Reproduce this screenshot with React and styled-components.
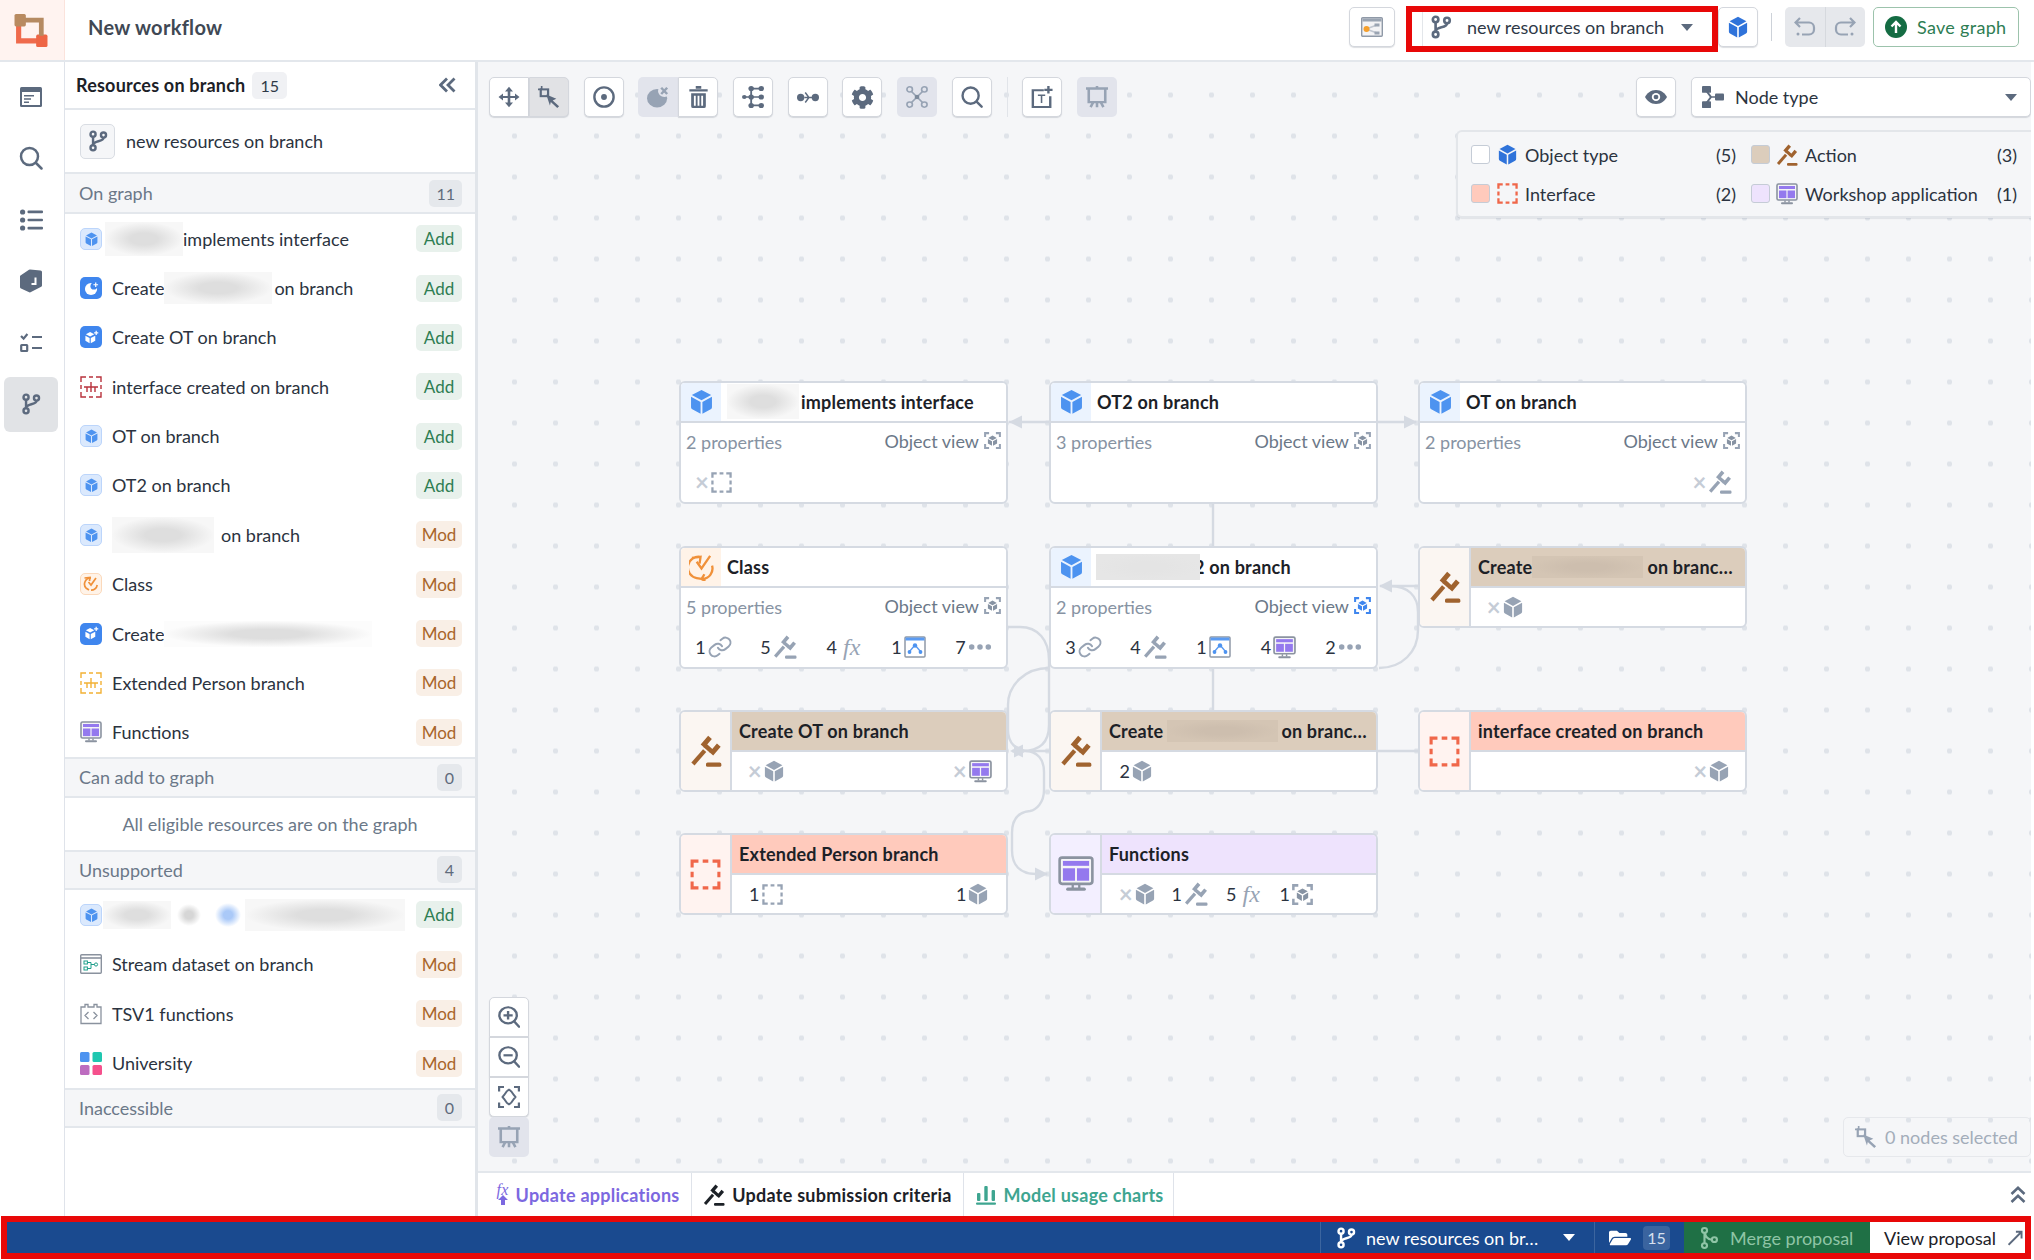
import React from 'react';
import styled, { createGlobalStyle } from 'styled-components';
import { FaCog, FaFolderOpen } from 'react-icons/fa';
import { Link as LinkIcon } from 'lucide-react';

const FONT = 'Lato, "Noto Sans", "Liberation Sans", sans-serif';
const SLATE = '#5c6a7e';
const GREY = '#97a3b4';
const BLUE = '#4d93f0';

const Global = createGlobalStyle`
  html, body { margin: 0; padding: 0; background: #fff; }
  body { font-family: ${FONT}; font-size: 18px; color: #1c2127; overflow: hidden; }
  * { box-sizing: border-box; }
`;

const Shell = styled.div`
  width: 2034px;
  height: 1260px;
  display: flex;
  flex-direction: column;
  background: #fff;
`;

const TopBar = styled.header`
  height: 62px;
  flex: none;
  display: flex;
  align-items: center;
  border-bottom: 2px solid #e3e7ec;
  padding-right: 15px;
`;

const LogoCell = styled.div`
  width: 65px;
  height: 100%;
  display: flex;
  align-items: center;
  justify-content: center;
  padding-right: 3px;
  background: #fff3f0;
  border-right: 1px solid #fbe3dc;
`;

const Title = styled.div`
  margin-left: 23px;
  margin-top: -6px;
  font-size: 20px;
  font-weight: 700;
  letter-spacing: .3px;
  color: #404854;
`;

const TopActions = styled.div`
  margin-left: auto;
  margin-top: -6px;
  display: flex;
  align-items: center;
`;

const Btn = styled.button`
  width: ${p => p.$w || 40}px;
  height: ${p => p.$h || 40}px;
  padding: 0;
  display: flex;
  align-items: center;
  justify-content: center;
  font: inherit;
  border-radius: 5px;
  color: ${SLATE};
  background: ${p => (p.$off ? '#e2e4ec' : p.$on ? '#e1e2e5' : '#fff')};
  border: ${p => (p.$off ? '0' : '1px solid #d4d7dd')};
  box-shadow: ${p => (p.$off ? 'none' : '0 1px 1px rgba(60, 70, 90, .18)')};
`;

const RedBox = styled.div`
  width: 312px;
  height: 46px;
  margin: 4px 0 0 11px;
  border: 6px solid #e80808;
  display: flex;
  align-items: center;
  background: #fff;
`;

const BranchSelect = styled.div`
  margin-left: 10px;
  height: 100%;
  flex: 1;
  display: flex;
  align-items: center;
  gap: 14px;
  padding: 0 0 4px 6px;
  font-size: 18px;
  color: #2f3947;
  border-left: 1px solid #e3e6ea;
`;

const Caret = styled.span`
  width: 0;
  height: 0;
  margin-left: ${p => (p.$auto ? 'auto' : `${p.$ml || 0}px`)};
  border-left: 6px solid transparent;
  border-right: 6px solid transparent;
  border-top: 7px solid ${p => p.$c || SLATE};
`;

const VSep = styled.div`
  width: 1px;
  height: 28px;
  margin: 0 13px;
  background: #cdd2d9;
`;

const UndoGroup = styled.div`
  width: 80px;
  height: 40px;
  display: flex;
  border-radius: 5px;
  background: #e6e8ec;
`;

const UndoBtn = styled.div`
  flex: 1;
  display: flex;
  align-items: center;
  justify-content: center;
  & + & { border-left: 1px solid #d6d9de; }
`;

const SaveBtn = styled.button`
  width: 146px;
  height: 40px;
  margin-left: 8px;
  display: flex;
  align-items: center;
  gap: 10px;
  padding: 0 0 0 11px;
  font: inherit;
  font-size: 18px;
  letter-spacing: .3px;
  color: #2e7d53;
  background: #fff;
  border: 1px solid #9cc3ac;
  border-radius: 5px;
`;

const Main = styled.div`
  flex: 1;
  min-height: 0;
  display: flex;
`;

const Rail = styled.nav`
  width: 65px;
  flex: none;
  display: flex;
  flex-direction: column;
  gap: 6.6px;
  padding: 7px 0 0 4px;
  border-right: 1px solid #dfe3ea;
`;

const RailItem = styled.div`
  width: 54px;
  height: 55px;
  display: flex;
  align-items: center;
  justify-content: center;
  border-radius: 6px;
  background: ${p => (p.$active ? '#e1e3e6' : 'transparent')};
`;

const Panel = styled.aside`
  width: 413px;
  flex: none;
  border-right: 3px solid #e1e5ea;
`;

const PanelHead = styled.div`
  height: 48px;
  display: flex;
  align-items: center;
  gap: 7px;
  padding: 0 19px 0 11px;
  border-bottom: 2px solid #e3e7ec;
  font-weight: 700;
  letter-spacing: .2px;
  color: #1c2127;
`;

const CollapseIcon = styled.span`
  margin-left: auto;
  display: flex;
`;

const Count = styled.span`
  min-width: 25px;
  height: 27px;
  padding: 0 ${p => (p.$dark ? 8 : 7)}px;
  display: inline-flex;
  align-items: center;
  justify-content: center;
  border-radius: 5px;
  font-size: 16px;
  font-weight: 400;
  letter-spacing: 0;
  color: ${p => (p.$dark ? '#2f3947' : '#5f6b7c')};
  background: ${p => (p.$dark ? '#f0f1f4' : '#e5e8ec')};
`;

const BranchRow = styled.div`
  height: 64px;
  display: flex;
  align-items: center;
  gap: 11px;
  padding-left: 15px;
  border-bottom: 2px solid #e3e7ec;
  color: #2b3340;
`;

const BranchChip = styled.div`
  width: 35px;
  height: 35px;
  display: flex;
  align-items: center;
  justify-content: center;
  background: #f5f6f8;
  border: 1px solid #d9dde3;
  border-radius: 5px;
`;

const Section = styled.div`
  height: ${p => p.$h || 40}px;
  display: flex;
  align-items: center;
  justify-content: space-between;
  padding: 0 13px 0 14px;
  background: #f5f6f8;
  border-bottom: 2px solid #e3e7ec;
  border-top: ${p => (p.$top ? '2px solid #e3e7ec' : '0')};
  color: #6b7888;
`;

const Row = styled.div`
  height: ${p => p.$h}px;
  display: flex;
  align-items: center;
  padding: 0 13px 0 15px;
  color: #2b3340;
  white-space: nowrap;
`;

const Chip = styled.div`
  width: 22px;
  height: 22px;
  flex: none;
  margin-right: ${p => p.$mr ?? 10}px;
  display: flex;
  align-items: center;
  justify-content: center;
  border-radius: 5px;
  background: ${p => p.$bg || 'transparent'};
  border: ${p => (p.$bd ? `1px solid ${p.$bd}` : '0')};
`;

const Blur = styled.span`
  position: relative;
  z-index: 1;
  display: inline-block;
  flex: none;
  width: ${p => p.$w}px;
  height: ${p => p.$h}px;
  margin-left: ${p => p.$ml || 0}px;
  margin-right: ${p => p.$mr || 0}px;
  background: radial-gradient(ellipse closest-side, ${p => p.$c || '#dedede'} 35%, ${p => p.$e || '#f7f7f7'} 100%);
`;

const Tag = styled.span`
  width: 46px;
  height: 27px;
  margin-left: auto;
  flex: none;
  display: flex;
  align-items: center;
  justify-content: center;
  border-radius: 5px;
  font-size: 17px;
  color: ${p => (p.$mod ? '#a8652a' : '#2e7d53')};
  background: ${p => (p.$mod ? '#f9efe6' : '#e8f1ec')};
`;

const Empty = styled.div`
  height: 52px;
  display: flex;
  align-items: center;
  justify-content: center;
  color: #6b7888;
`;

const Work = styled.div`
  flex: 1;
  min-width: 0;
  display: flex;
  flex-direction: column;
  margin-right: 3px;
`;

const Canvas = styled.section`
  position: relative;
  flex: 1;
  min-height: 0;
  overflow: hidden;
  background-color: #f5f6f8;
  background-image: radial-gradient(circle, #dfe3e9 2.4px, transparent 3px);
  background-size: 41px 41px;
  background-position: 16px 12.5px;
`;

const Edges = styled.svg`
  position: absolute;
  left: 0;
  top: 0;
`;

const Toolbar = styled.div`
  position: absolute;
  left: 11px;
  top: 15px;
  display: flex;
  align-items: center;
  gap: 14.7px;
`;

const Group = styled.div`
  display: flex;
  flex-direction: ${p => (p.$col ? 'column' : 'row')};
  & > button { border-radius: 0; }
  & > button:first-child { border-radius: ${p => (p.$col ? '5px 5px 0 0' : '5px 0 0 5px')}; }
  & > button:last-child { border-radius: ${p => (p.$col ? '0 0 5px 5px' : '0 5px 5px 0')}; }
`;

const ToolSep = styled.div`
  width: 1px;
  height: 40px;
  background: #e1e4e9;
`;

const ViewTools = styled.div`
  position: absolute;
  right: 0;
  top: 15px;
  display: flex;
  gap: 15px;
`;

const NodeSelect = styled.div`
  width: 340px;
  height: 40px;
  display: flex;
  align-items: center;
  padding: 0 13px 0 10px;
  gap: 11px;
  color: #2b3340;
  background: #fff;
  border: 1px solid #d4d7dd;
  border-radius: 5px;
  box-shadow: 0 1px 1px rgba(60, 70, 90, .18);
`;

const Legend = styled.div`
  position: absolute;
  right: 0;
  top: 68px;
  width: 575px;
  height: 88px;
  display: grid;
  grid-template-columns: 265px 266px;
  grid-auto-rows: 39px;
  column-gap: 15px;
  padding: 3px 13px 0 13px;
  background: #f5f6f8;
  border: 2px solid #e3e6ea;
  border-right: 0;
  border-radius: 6px 0 0 6px;
  box-shadow: 0 1px 1px rgba(60, 70, 90, .1);
`;

const LegendItem = styled.div`
  display: flex;
  align-items: center;
  white-space: nowrap;
  color: #2b3340;
`;

const Swatch = styled.span`
  width: 19px;
  height: 19px;
  flex: none;
  margin-right: 6px;
  border-radius: 3px;
  background: ${p => p.$c};
  border: 1px solid #c5ccd6;
`;

const LegendIcon = styled.span`
  width: 22px;
  flex: none;
  margin-right: 7px;
  display: flex;
  justify-content: center;
`;

const LegendCount = styled.span`
  margin-left: auto;
`;

const ZoomTools = styled.div`
  position: absolute;
  left: 11px;
  bottom: 14px;
  display: flex;
  flex-direction: column;
`;

const Selected = styled.div`
  position: absolute;
  right: 0;
  bottom: 14px;
  width: 188px;
  height: 40px;
  display: flex;
  align-items: center;
  gap: 8px;
  padding-left: 11px;
  color: #a3adba;
  border: 1px solid #e6e8ec;
  border-radius: 5px;
`;

const NodeCard = styled.article`
  position: absolute;
  left: ${p => p.$x}px;
  top: ${p => p.$y}px;
  width: 329px;
  height: ${p => p.$h}px;
  display: flex;
  overflow: hidden;
  background: #fff;
  border: 2px solid #d5dae2;
  border-radius: 6px;
`;

const NodeSide = styled.div`
  width: 51px;
  flex: none;
  display: flex;
  align-items: center;
  justify-content: center;
  background: ${p => p.$bg};
  border-right: 2px solid #d5dae2;
`;

const NodeMain = styled.div`
  flex: 1;
  min-width: 0;
  display: flex;
  flex-direction: column;
`;

const NodeHead = styled.div`
  height: 40px;
  flex: none;
  display: flex;
  align-items: center;
  overflow: hidden;
  background: ${p => p.$bg || '#fff'};
  border-bottom: 2px solid #d5dae2;
  font-weight: 700;
  letter-spacing: .2px;
  color: #1c2127;
  white-space: nowrap;
`;

const HeadIcon = styled.div`
  width: 40px;
  height: 100%;
  flex: none;
  margin-right: ${p => p.$mr ?? 6}px;
  display: flex;
  align-items: center;
  justify-content: center;
  background: ${p => p.$bg};
`;

const HeadText = styled.div`
  display: flex;
  align-items: center;
  margin-top: -1px;
  padding-left: ${p => p.$pl || 0}px;
`;

const NodeInfo = styled.div`
  height: 40px;
  flex: none;
  display: flex;
  align-items: center;
  justify-content: space-between;
  margin-top: -1px;
  padding: 0 5px;
  color: #8793a3;
`;

const ViewLabel = styled.span`
  display: flex;
  align-items: center;
  gap: 5px;
  margin-top: -3px;
  color: #6b7888;
`;

const Stats = styled.div`
  flex: 1;
  display: grid;
  grid-template-columns: repeat(5, 1fr);
  align-items: center;
  padding: 0 ${p => p.$padR ?? 0}px 0 ${p => p.$pad || 0}px;
`;

const Stat = styled.div`
  display: flex;
  align-items: center;
  justify-content: center;
  gap: 2px;
  color: #2b3340;
`;

const Zero = styled.span`
  font-size: 24px;
  line-height: 20px;
  font-weight: 700;
  color: #c5ccd6;
`;

const Fx = styled.span`
  font-family: "Liberation Serif", serif;
  font-style: italic;
  font-size: 24px;
  line-height: 20px;
  color: ${GREY};
  margin-left: 4px;
`;

const ChainIcon = styled(LinkIcon)`
  transform: rotate(6deg);
`;

const TabBar = styled.div`
  height: 45px;
  flex: none;
  display: flex;
  align-items: stretch;
  border-top: 2px solid #e3e7ec;
`;

const Tab = styled.div`
  width: ${p => p.$w}px;
  display: flex;
  align-items: center;
  justify-content: center;
  gap: 7px;
  padding-left: ${p => p.$pl || 0}px;
  font-weight: 700;
  letter-spacing: .25px;
  color: ${p => p.$c};
  border-right: 1px solid #dfe3ea;
`;

const FxUp = styled.span`
  display: flex;
  flex-direction: column;
  align-items: center;
  font-family: "Liberation Serif", serif;
  font-style: italic;
  font-weight: 400;
  font-size: 16px;
  line-height: 11px;
  color: #7c68e0;
`;

const TabEnd = styled.div`
  margin-left: auto;
  display: flex;
  align-items: center;
  padding-right: 5px;
`;

const BottomFrame = styled.footer`
  height: 43px;
  flex: none;
  margin: 0 3px 1px 1px;
  display: flex;
  justify-content: flex-end;
  border: 6px solid #e80808;
  background: #1a4a8f;
  color: #fff;
  overflow: hidden;
`;

const FootCell = styled.div`
  width: ${p => p.$w}px;
  flex: none;
  display: flex;
  align-items: center;
  gap: ${p => p.$gap || 10}px;
  padding-left: ${p => p.$pl || 14}px;
  white-space: nowrap;
  overflow: hidden;
  color: ${p => p.$c || '#fff'};
  background: ${p => p.$bg || 'transparent'};
  border-left: ${p => (p.$line ? '1px solid #3c659f' : '0')};
`;

const FootCount = styled.span`
  width: 27px;
  height: 24px;
  display: flex;
  align-items: center;
  justify-content: center;
  font-size: 16px;
  color: #d6e0ef;
  background: #3a649f;
  border-radius: 4px;
`;

const Branch = ({ s = 20, c = SLATE }) => (
  <svg width={s} height={s} viewBox="0 0 20 20" fill="none" stroke={c} strokeWidth="2.2">
    <circle cx="5.5" cy="3.8" r="2.3" />
    <circle cx="15" cy="4.6" r="2.3" />
    <circle cx="5.5" cy="16.2" r="2.3" />
    <path d="M5.5 6.2V13.8M15 7C15 11 5.8 9.5 5.5 13.5" />
  </svg>
);

const Cube = ({ s = 22, c = BLUE }) => (
  <svg width={s} height={s * 1.1} viewBox="0 0 20 22.5" fill={c} preserveAspectRatio="none">
    <path d="M10 .8 18.4 5.4 10 10.1 1.6 5.4Z" />
    <path d="M.9 7 9.2 11.6V22L2 18a2 2 0 0 1-1.1-1.8Z" />
    <path d="M19.1 7 10.8 11.6V22L18 18a2 2 0 0 0 1.1-1.8Z" />
  </svg>
);

const Gavel = ({ s = 24, c = GREY }) => (
  <svg width={s} height={s} viewBox="0 0 24 24" fill={c}>
    <path d="M8 7.2 13.6.6 16.4 3 10.8 9.6ZM14.6 13 20.2 6.4 23 8.8 17.4 15.4Z" />
    <path d="M12.2 6.4 17.2 10.8 15 13.4 10 9Z" />
    <path d="M9.8 10.6 12.2 12.8 3.4 22.8 1 20.6Z" />
    <rect x="12" y="20.6" width="11.5" height="3.2" rx="1.2" />
  </svg>
);

const Dashed = ({ s = 22, c = GREY, w = 2.4 }) => (
  <svg width={s} height={s} viewBox="0 0 22 22" fill="none" stroke={c} strokeWidth={w}>
    <path d="M1.5 6V1.5H6M9 1.5h4M16 1.5h4.5V6M20.5 9v4M20.5 16v4.5H16M13 20.5H9M6 20.5H1.5V16M1.5 13V9" />
  </svg>
);

const Workshop = ({ s = 22, frame = '#8b93a0' }) => (
  <svg width={s} height={s} viewBox="0 0 22 22">
    <rect x="1" y="1" width="20" height="16" rx="1.5" fill="#f4f4f7" stroke={frame} strokeWidth="1.6" />
    <rect x="3" y="3" width="16" height="3" fill="#9479ee" />
    <rect x="3" y="7.5" width="7.4" height="7.6" fill="#9479ee" />
    <rect x="11.6" y="7.5" width="7.4" height="7.6" fill="#9479ee" />
    <path d="M9 17.5v2M13 17.5v2" stroke={frame} strokeWidth="1.4" />
    <rect x="5" y="19.3" width="12" height="2" rx="1" fill={frame} />
  </svg>
);

const AppIcon = ({ s = 22 }) => (
  <svg width={s} height={s} viewBox="0 0 22 22" fill="none">
    <rect x="1" y="1" width="20" height="20" rx="1" fill="#fff" stroke="#8f99a7" strokeWidth="1.5" />
    <rect x="1.5" y="1.5" width="19" height="3" fill="#5b9bf2" />
    <path d="M11 9 5.5 15.5M11 9 16.5 15.5" stroke="#5b9bf2" strokeWidth="1.4" />
    <circle cx="11" cy="9.5" r="2.2" fill="#4d93f0" />
    <circle cx="5.5" cy="16" r="1.9" fill="#4d93f0" />
    <circle cx="16.5" cy="16" r="1.9" fill="#4d93f0" />
  </svg>
);

const ObjectView = ({ s = 18, c = GREY, cube = '#8793a3' }) => (
  <svg width={s} height={s} viewBox="0 0 20 20" fill="none">
    <path d="M1.3 6V1.3H6M14 1.3H18.7V6M18.7 14V18.7H14M6 18.7H1.3V14" stroke={c} strokeWidth="2.4" />
    <path d="M10 4.2 15 7 10 9.8 5 7ZM4.6 8.2 9.4 10.9V16.2L4.6 13.4ZM15.4 8.2 10.6 10.9V16.2L15.4 13.4Z" fill={cube} />
  </svg>
);

const Dots = () => (
  <svg width="24" height="8" viewBox="0 0 26 8" fill={GREY}>
    <circle cx="4" cy="4" r="3" />
    <circle cx="13" cy="4" r="3" />
    <circle cx="22" cy="4" r="3" />
  </svg>
);

const ICONS = {
  cube: <Cube s={20} c={GREY} />,
  gavel: <Gavel s={24} />,
  dash: <Dashed s={21} />,
  link: <ChainIcon size={24} color={GREY} strokeWidth={2} />,
  app: <AppIcon />,
  work: <Workshop s={23} />,
  view: <ObjectView s={21} />,
  dots: <Dots />,
  fx: <Fx>fx</Fx>,
};

const Logo = () => (
  <svg width="34" height="33" viewBox="1.5 0 33 32">
    <path d="M6 10V26H26" fill="none" stroke="#ef6a4c" strokeWidth="5" />
    <rect x="23" y="20" width="11" height="12" rx="1.5" fill="#ee6545" />
    <path d="M8 6H28V21" fill="none" stroke="#b58a62" strokeWidth="4.6" />
    <rect x="2" y="0" width="11" height="12" rx="1.5" fill="#b88a60" />
  </svg>
);

const RailIcons = [
  <svg key="a" width="22" height="20" viewBox="0 0 22 20"><rect width="22" height="20" rx="1.5" fill={SLATE} /><rect x="2" y="5" width="18" height="13" fill="#fff" /><path d="M4 8h10v1.6H4zM4 11.2h7v1.6H4zM4 14.4h5V16H4z" fill={SLATE} /></svg>,
  <svg key="b" width="24" height="24" viewBox="0 0 24 24" fill="none" stroke={SLATE} strokeWidth="2.5"><circle cx="10.5" cy="10.5" r="8.5" /><path d="M17 17l5.5 5.5" strokeLinecap="round" /></svg>,
  <svg key="c" width="23" height="22" viewBox="0 0 23 22" fill={SLATE}><circle cx="2.6" cy="3" r="2.6" /><circle cx="2.6" cy="11" r="2.6" /><circle cx="2.6" cy="19" r="2.6" /><rect x="7.5" y="1.6" width="15.5" height="2.6" rx="1" /><rect x="7.5" y="9.7" width="15.5" height="2.6" rx="1" /><rect x="7.5" y="17.8" width="15.5" height="2.6" rx="1" /></svg>,
  <svg key="d" width="22" height="24" viewBox="0 0 22 24"><path d="M.5 6.5 9 .8a1.5 1.5 0 0 1 1-.3L20.5 1.5A1.5 1.5 0 0 1 22 3V16.5a1.5 1.5 0 0 1-.8 1.3L10.5 23.3a1.5 1.5 0 0 1-1.3 0L1 19.5a1.5 1.5 0 0 1-1-1.4V8a1.5 1.5 0 0 1 .5-1.5Z" fill={SLATE} /><path d="M15.5 8.5v6.5H11.5" fill="none" stroke="#fff" strokeWidth="2" /></svg>,
  <svg key="e" width="22" height="20" viewBox="0 0 22 20" fill="none" stroke={SLATE} strokeWidth="2.2"><path d="M1 3l2.6 2.6L7.4 1" /><rect x="1.2" y="12" width="6" height="6" rx=".5" /><path d="M12 4h10M12 15h10" /></svg>,
  <Branch key="f" s={22} />,
];

const cubeChip = <Chip $bg="#dbe9fd" $bd="#bcd5fb"><Cube s={13} /></Chip>;

const pieChip = (
  <Chip $bg="#3f86ee">
    <svg width="15" height="15" viewBox="0 0 16 16"><circle cx="7.5" cy="8.5" r="6.5" fill="#fff" /><circle cx="10.5" cy="5.5" r="3.6" fill="#3f86ee" /><path d="M12.5 1.5v5M10 4h5" stroke="#fff" strokeWidth="1.3" /></svg>
  </Chip>
);

const cubeActionChip = (
  <Chip $bg="#3f86ee">
    <svg width="15" height="15" viewBox="0 0 16 16" fill="#fff"><path d="M6.5 2 11 4.5 6.5 7 2 4.5ZM1.5 6 6 8.5V14L1.5 11.5ZM12 6 7.2 8.5V14L12 11.5Z" /><path d="M13 .8v4.4M10.8 3h4.4" stroke="#fff" strokeWidth="1.3" /></svg>
  </Chip>
);

const classChip = (
  <Chip $bg="#fff3e8" $bd="#fbd9bb">
    <svg width="16" height="16" viewBox="0 0 16 16" fill="none" stroke="#f0913a" strokeWidth="1.7"><path d="M8 1.8A6.2 6.2 0 0 0 3 12l3 2M8 14.2A6.2 6.2 0 0 0 14.2 9" /><path d="M1.5 2 7 1.5 6.5 5M5.5 6l2.5 3 5-7" /></svg>
  </Chip>
);

const treeIface = c => (
  <Chip>
    <svg width="22" height="22" viewBox="0 0 22 22" fill="none" stroke={c} strokeWidth="1.4">
      <path d="M1 6V1H6M9 1h4M16 1h5V6M21 9v4M21 16v5H16M13 21H9M6 21H1V16M1 13V9" />
      <path d="M4 11h14M7 11v5M11 6v10M15 11v5" />
    </svg>
  </Chip>
);

const workshopChip = <Chip><Workshop s={22} /></Chip>;

const streamChip = (
  <Chip>
    <svg width="22" height="20" viewBox="0 0 22 20" fill="none"><rect x=".7" y=".7" width="20.6" height="18.6" rx="1" stroke="#8a929e" strokeWidth="1.4" /><path d="M1 4h20" stroke="#8a929e" strokeWidth="1.6" /><rect x="4" y="7" width="3.4" height="3" stroke="#1f9e8a" /><rect x="4" y="13" width="3.4" height="3" stroke="#1f9e8a" /><circle cx="16" cy="10.5" r="1.6" stroke="#1f9e8a" /><path d="M7.5 8.5H11V14.5H7.5M11 10.5h3.5" stroke="#1f9e8a" /></svg>
  </Chip>
);

const codeChip = (
  <Chip>
    <svg width="22" height="22" viewBox="0 0 22 22" fill="none" stroke="#8a929e" strokeWidth="1.3"><path d="M1 4h4V1.5h3V4h6V1.5h3V4h4v16.5H1Z" /><path d="M8.5 9 5 12.5 8.5 16M13.5 9 17 12.5 13.5 16" /></svg>
  </Chip>
);

const uniChip = (
  <Chip>
    <svg width="22" height="23" viewBox="0 0 22 23"><rect width="9.5" height="10" rx="1.5" fill="#4d93f0" /><rect x="12.5" width="9.5" height="10" rx="1.5" fill="#1fc7b0" /><rect y="13" width="9.5" height="10" rx="1.5" fill="#bd6cc0" /><rect x="12.5" y="13" width="9.5" height="10" rx="1.5" fill="#f5508c" /></svg>
  </Chip>
);

const ROWS_ON_GRAPH = [
  { chip: <Chip $bg="#dbe9fd" $bd="#bcd5fb" $mr={3}><Cube s={13} /></Chip>, label: <><Blur $w={78} $h={34} />implements interface</> },
  { chip: pieChip, label: <>Create<Blur $w={108} $h={32} $mr={2} />on branch</> },
  { chip: cubeActionChip, label: 'Create OT on branch' },
  { chip: treeIface('#b8323c'), label: 'interface created on branch' },
  { chip: cubeChip, label: 'OT on branch' },
  { chip: cubeChip, label: 'OT2 on branch' },
  { chip: cubeChip, label: <><Blur $w={102} $h={36} $mr={7} />on branch</>, mod: true },
  { chip: classChip, label: 'Class', mod: true },
  { chip: cubeActionChip, label: <>Create<Blur $w={208} $h={26} $e="#fcfcfc" /></>, mod: true },
  { chip: treeIface('#f2b135'), label: 'Extended Person branch', mod: true },
  { chip: workshopChip, label: 'Functions', mod: true },
];

const ROWS_UNSUPPORTED = [
  { chip: <Chip $bg="#dbe9fd" $bd="#bcd5fb" $mr={1}><Cube s={13} /></Chip>, label: <><Blur $w={68} $h={28} /><Blur $w={24} $h={22} $ml={6} $c="#d6d6d6" $e="#fff" /><Blur $w={26} $h={24} $ml={14} $c="#aac9f8" $e="#fff" /><Blur $w={160} $h={32} $ml={4} /></> },
  { chip: streamChip, label: 'Stream dataset on branch', mod: true },
  { chip: codeChip, label: 'TSV1 functions', mod: true },
  { chip: uniChip, label: 'University', mod: true },
];

const ACTION = { side: '#fbf6f2', head: '#dccdbc', icon: <Gavel s={32} c="#a0632f" /> };
const IFACE = { side: '#fff3f0', head: '#ffcabc', icon: <Dashed s={31} c="#f0674a" w={2.2} /> };
const WORK = { side: '#f3efff', head: '#eee3fd', icon: <Workshop s={36} /> };
const TAN = { $c: '#cdbeae', $e: '#d4c5b4' };

const NODES = [
  { x: 201, y: 319, h: 123, icon: <Cube s={23} />, tint: '#ebf3fe', mr: 6, title: <><Blur $w={72} $h={35} $mr={2} />implements interface</>, props: '2 properties', stats: [['×', 'dash']] },
  { x: 571, y: 319, h: 123, icon: <Cube s={23} />, tint: '#ebf3fe', title: 'OT2 on branch', props: '3 properties', stats: [] },
  { x: 940, y: 319, h: 123, icon: <Cube s={23} />, tint: '#ebf3fe', title: 'OT on branch', props: '2 properties', stats: [null, null, null, null, ['×', 'gavel']] },
  { x: 201, y: 484, h: 123, tint: '#fff3e8', icon: <svg width="25" height="27" viewBox="0 0 26 28" fill="none" stroke="#f0913a" strokeWidth="2.4"><path d="M12 3A11 11 0 0 0 8 25l5 .8M3 4l9-1-1 7M14 26A11 11 0 0 0 24 12M16 21l-3 5 4 2" /><path d="M8 8l5 7L22 2" /></svg>, title: 'Class', props: '5 properties', stats: [['1', 'link'], ['5', 'gavel'], ['4', 'fx'], ['1', 'app'], ['7', 'dots']] },
  { x: 571, y: 484, h: 123, icon: <Cube s={23} />, tint: '#ebf3fe', mr: 5, title: <><Blur $w={104} $h={26} $c="#e4e4e4" $e="#e6e6e6" $mr={-6} />2 on branch</>, props: '2 properties', blueView: true, stats: [['3', 'link'], ['4', 'gavel'], ['1', 'app'], ['4', 'work'], ['2', 'dots']] },
  { x: 940, y: 484, h: 82, type: ACTION, title: <>Create<Blur $w={111} $h={22} {...TAN} $mr={4} />on branc…</>, stats: [['×', 'cube']] },
  { x: 201, y: 648, h: 82, type: ACTION, title: 'Create OT on branch', stats: [['×', 'cube'], null, null, null, ['×', 'work']] },
  { x: 571, y: 648, h: 82, type: ACTION, title: <>Create<Blur $w={111} $h={22} {...TAN} $ml={4} $mr={3} />on branc…</>, stats: [['2', 'cube']] },
  { x: 940, y: 648, h: 82, type: IFACE, title: 'interface created on branch', stats: [null, null, null, null, ['×', 'cube']] },
  { x: 201, y: 771, h: 82, type: IFACE, title: 'Extended Person branch', stats: [['1', 'dash'], null, null, null, ['1', 'cube']] },
  { x: 571, y: 771, h: 82, type: WORK, padR: 0, title: 'Functions', stats: [['×', 'cube'], ['1', 'gavel'], ['5', 'fx'], ['1', 'view']] },
];

const StatRow = ({ stats, pad, padR }) => (
  <Stats $pad={pad} $padR={padR}>
    {[0, 1, 2, 3, 4].map(i => {
      const s = stats[i];
      return (
        <Stat key={i}>
          {s && (s[0] === '×' ? <Zero>×</Zero> : s[0])}
          {s && ICONS[s[1]]}
        </Stat>
      );
    })}
  </Stats>
);

const GraphNode = ({ node }) =>
  node.type ? (
    <NodeCard $x={node.x} $y={node.y} $h={node.h}>
      <NodeSide $bg={node.type.side}>{node.type.icon}</NodeSide>
      <NodeMain>
        <NodeHead $bg={node.type.head}>
          <HeadText $pl={7}>{node.title}</HeadText>
        </NodeHead>
        <StatRow stats={node.stats} pad={8} padR={node.padR ?? 8} />
      </NodeMain>
    </NodeCard>
  ) : (
    <NodeCard $x={node.x} $y={node.y} $h={node.h}>
      <NodeMain>
        <NodeHead>
          <HeadIcon $bg={node.tint} $mr={node.mr}>{node.icon}</HeadIcon>
          <HeadText>{node.title}</HeadText>
        </NodeHead>
        <NodeInfo>
          <span>{node.props}</span>
          <ViewLabel>
            Object view
            <ObjectView s={17} c={node.blueView ? '#3f86ee' : GREY} cube={node.blueView ? '#3f86ee' : '#8793a3'} />
          </ViewLabel>
        </NodeInfo>
        <StatRow stats={node.stats} />
      </NodeMain>
    </NodeCard>
  );

const ArrowHead = ({ x, y, dir }) => (
  <path d={`M${x} ${y}l${-13 * dir} -6.5v13Z`} fill="#d5dae2" stroke="none" />
);

const EdgeLayer = () => (
  <Edges width="1553" height="1108" viewBox="478 62 1553 1108" fill="none" stroke="#d5dae2" strokeWidth="2.4">
    <path d="M1049 422H1009M1377 422H1416M1213 504V546M1213 668V710M1418 586H1380M1377 751H1418" />
    <path d="M1379 668C1402 668 1418 652 1418 630V612C1418 596 1408 586 1390 586" />
    <path d="M1007 627H1020C1038 627 1049 640 1049 660V725C1049 742 1040 751 1022 751H1012" />
    <path d="M1049 668C1025 668 1008 685 1008 705V730C1008 743 1016 751 1029 751H1049" />
    <path d="M1025 751C1038 751 1044 760 1044 772V790C1044 803 1036 810 1030 811C1018 812 1012 820 1012 833V850C1012 865 1020 874 1036 874H1047" />
    <ArrowHead x={1009} y={422} dir={-1} />
    <ArrowHead x={1417} y={422} dir={1} />
    <ArrowHead x={1379} y={586} dir={-1} />
    <ArrowHead x={1010} y={751} dir={-1} />
    <ArrowHead x={1027} y={751} dir={1} />
    <ArrowHead x={1048} y={874} dir={1} />
  </Edges>
);

// toolbar glyphs are all about 22px square in the picture
const T = props => <svg width="22" height="22" preserveAspectRatio="none" {...props} />;

const selectIcon = c => (
  <T viewBox="0 0 24 26"><rect x="3" y="4" width="8" height="8" fill="none" stroke={c} strokeWidth="2.4" /><path d="M0 4h4M4 0v4" stroke={c} strokeWidth="1.8" /><path d="M9 10 20 15 16 17 23 24 21 26 14 19 13 23Z" fill={c} /></T>
);

const Ic = {
  move: <T viewBox="0 0 22 26" fill={SLATE}><path d="M11 1 15 6.5H12.3V11.7H17V9L21.5 13 17 17V14.3H12.3V19.5H15L11 25 7 19.5H9.7V14.3H5V17L.5 13 5 9V11.7H9.7V6.5H7Z" /></T>,
  target: <T viewBox="0 0 24 24" fill="none" stroke={SLATE} strokeWidth="2.6"><circle cx="12" cy="12" r="10.5" /><circle cx="12" cy="12" r="3.2" fill={SLATE} stroke="none" /></T>,
  pieX: <T viewBox="0 0 24 26"><circle cx="11" cy="14.5" r="11" fill="#97a3b4" /><circle cx="19" cy="6" r="7" fill="#e2e4ec" /><path d="M15.5 2 22 9.5M22 2 15.5 9.5" stroke="#97a3b4" strokeWidth="2.6" /></T>,
  trash: <svg width="19" height="22" viewBox="0 0 20 24" fill={SLATE}><path d="M0 3.5h20v2.6H0zM7 0h6v3H7z" /><path d="M2 8h16v14a2 2 0 0 1-2 2H4a2 2 0 0 1-2-2Zm3 2.5V21.5h2V10.5Zm4 0V21.5h2V10.5Zm4 0V21.5h2V10.5Z" fillRule="evenodd" /></svg>,
  layout: <T viewBox="0 0 24 26" fill={SLATE}><path d="M10 3h11M10 13h11M10 23h11M10 3v20M2 13h8" stroke={SLATE} strokeWidth="2" /><circle cx="2.5" cy="13" r="2.5" /><circle cx="10" cy="3" r="3" /><circle cx="21" cy="3" r="3" /><circle cx="10" cy="13" r="3" /><circle cx="21" cy="13" r="3" /><circle cx="10" cy="23" r="3" /><circle cx="21" cy="23" r="3" /></T>,
  merge: <svg width="22" height="11" viewBox="0 0 24 12" fill={SLATE} preserveAspectRatio="none"><circle cx="4" cy="6" r="4" /><circle cx="20" cy="6" r="4" /><path d="M8 6h9M9 .5 13 6 9 11.5" fill="none" stroke={SLATE} strokeWidth="1.6" /></svg>,
  graph: <T viewBox="0 0 24 26" fill="none" stroke="#97a3b4" strokeWidth="1.8"><circle cx="4" cy="4" r="3" /><circle cx="20" cy="4" r="3" /><circle cx="4" cy="22" r="3" /><circle cx="20" cy="22" r="3" /><path d="M6 6.5 18 19.5M18 6.5 6 19.5" /><circle cx="12" cy="13" r="2.6" fill="#7d8a9b" stroke="none" /></T>,
  search: <T viewBox="0 0 24 24" fill="none" stroke={SLATE} strokeWidth="2.6"><circle cx="10.5" cy="10.5" r="8.8" /><path d="M17 17l5.5 5.5" strokeLinecap="round" /></T>,
  addText: <T viewBox="0 0 24 26" fill="none" stroke={SLATE} strokeWidth="2.6"><path d="M14 5H2V25H21V12" /><path d="M19 0v9M14.5 4.5h9" /><path d="M7.5 11h8M11.5 11v9" strokeWidth="1.7" /></T>,
  present: <T viewBox="0 0 24 26" fill="none" stroke="#97a3b4" strokeWidth="2.8"><path d="M0 3h24M3 3V19H21V3M12 0V3" /><path d="M12 19v6M8 19l-3 6M16 19l3 6" /></T>,
  eye: <svg width="22" height="14" viewBox="0 0 24 16" preserveAspectRatio="none"><path d="M12 0C6 0 2 4 0 8c2 4 6 8 12 8s10-4 12-8C22 4 18 0 12 0Z" fill={SLATE} /><circle cx="12" cy="8" r="4.6" fill="#fff" /><circle cx="12" cy="8" r="2.6" fill={SLATE} /></svg>,
  nodeType: <T viewBox="0 0 22 26" fill={SLATE}><rect width="9" height="8" rx="1" /><rect y="18" width="9" height="8" rx="1" /><rect x="13" y="9" width="9" height="8" rx="1" /><path d="M4.5 6 9 13 4.5 20M9 13h5" fill="none" stroke={SLATE} strokeWidth="2" /></T>,
  zoomIn: <T viewBox="0 0 24 26" fill="none" stroke={SLATE} strokeWidth="2.6"><circle cx="11" cy="11" r="9.5" /><path d="M17.5 18l5.5 6.5" strokeLinecap="round" /><path d="M11 6v10M6 11h10" /></T>,
  zoomOut: <T viewBox="0 0 24 26" fill="none" stroke={SLATE} strokeWidth="2.6"><circle cx="11" cy="11" r="9.5" /><path d="M17.5 18l5.5 6.5" strokeLinecap="round" /><path d="M6 11h10" /></T>,
  fit: <T viewBox="0 0 22 24" fill="none" stroke={SLATE} strokeWidth="2.4"><path d="M1 6V1H6M16 1H21V6M21 18V23H16M6 23H1V18" /><path d="M9 5.5 11 4 13 5.5M16 10 17.5 12 16 14M13 18.5 11 20 9 18.5M6 14 4.5 12 6 10M9 5.5 6 10M13 5.5 16 10M16 14 13 18.5M6 14 9 18.5" strokeWidth="2" /></T>,
  undo: <svg width="22" height="20" viewBox="0 0 22 20" fill="none" stroke="#97a3b4" strokeWidth="2.2"><path d="M6 1 1.5 5.5 6 10M2 5.5H15a5 5 0 0 1 5 5v2a5 5 0 0 1-5 5H8" /><circle cx="4" cy="17" r="1.5" fill="#97a3b4" stroke="none" /></svg>,
  redo: <svg width="22" height="20" viewBox="0 0 22 20" fill="none" stroke="#97a3b4" strokeWidth="2.2"><path d="M16 1 20.5 5.5 16 10M20 5.5H7a5 5 0 0 0-5 5v2a5 5 0 0 0 5 5h7" /><circle cx="18" cy="17" r="1.5" fill="#97a3b4" stroke="none" /></svg>,
  upload: <svg width="22" height="22" viewBox="0 0 22 22"><circle cx="11" cy="11" r="11" fill="#146c43" /><path d="M11 17V6M6.5 10.5 11 6l4.5 4.5" fill="none" stroke="#fff" strokeWidth="2.4" /></svg>,
  share: <svg width="22" height="20" viewBox="0 0 22 20"><rect x=".7" y=".7" width="20.6" height="18.6" rx="1" fill="#f3f3f5" stroke="#8f99a7" strokeWidth="1.4" /><rect x="1.5" y="1.5" width="19" height="3" fill="#9aa4b2" /><path d="M5 12 16 8M5 12 16 16" stroke="#c0c6cf" strokeWidth="1.6" /><circle cx="5.5" cy="12" r="3" fill="#f59f2c" /><rect x="13.5" y="6.5" width="5" height="3" fill="#9aa4b2" /><rect x="13.5" y="14.5" width="5" height="3" fill="#9aa4b2" /></svg>,
  fxUp: <svg width="12" height="10" viewBox="0 0 12 10" fill="#7c68e0"><path d="M6 0 11 5H8V10H4V5H1Z" /></svg>,
  bars: <svg width="20" height="20" viewBox="0 0 20 20" fill="#3ea590"><rect x="1" y="8" width="3.4" height="8" rx="1" /><rect x="8.3" y="1" width="3.4" height="15" rx="1" /><rect x="15.6" y="5" width="3.4" height="11" rx="1" /><rect y="17.6" width="20" height="2.2" rx="1" /></svg>,
  chevUp: <svg width="16" height="18" viewBox="0 0 16 18" fill="none" stroke={SLATE} strokeWidth="2.6"><path d="M1.5 8 8 1.8 14.5 8M1.5 16 8 9.8 14.5 16" /></svg>,
  chevLeft: <svg width="17" height="16" viewBox="0 0 17 16" fill="none" stroke={SLATE} strokeWidth="2.8"><path d="M8 1.5 1.5 8 8 14.5M15.5 1.5 9 8 15.5 14.5" /></svg>,
  mergeP: <svg width="18" height="22" viewBox="0 0 20 26" fill="none" stroke="#8fc5a6" strokeWidth="2.4" preserveAspectRatio="none"><circle cx="5" cy="4" r="2.8" /><circle cx="5" cy="22" r="2.8" /><circle cx="16" cy="15" r="2.8" /><path d="M5 7V19M5.5 7C6 12 9 14.5 13 15" /></svg>,
  openArrow: <svg width="30" height="26" viewBox="0 0 30 26" fill="none" stroke={SLATE} strokeWidth="3.4"><path d="M1 25 24 2M14 2H24V14" /></svg>,
};

const App = () => (
  <Shell>
    <Global />
    <TopBar>
      <LogoCell><Logo /></LogoCell>
      <Title>New workflow</Title>
      <TopActions>
        <Btn $w={46}>{Ic.share}</Btn>
        <RedBox>
          <BranchSelect>
            <Branch s={24} />
            new resources on branch
            <Caret $ml={3} />
          </BranchSelect>
        </RedBox>
        <Btn><Cube s={20} c="#2f73da" /></Btn>
        <VSep />
        <UndoGroup>
          <UndoBtn>{Ic.undo}</UndoBtn>
          <UndoBtn>{Ic.redo}</UndoBtn>
        </UndoGroup>
        <SaveBtn>{Ic.upload}Save graph</SaveBtn>
      </TopActions>
    </TopBar>

    <Main>
      <Rail>
        {RailIcons.map((icon, i) => (
          <RailItem key={i} $active={i === 5}>{icon}</RailItem>
        ))}
      </Rail>

      <Panel>
        <PanelHead>
          Resources on branch
          <Count $dark>15</Count>
          <CollapseIcon>{Ic.chevLeft}</CollapseIcon>
        </PanelHead>
        <BranchRow>
          <BranchChip><Branch s={22} /></BranchChip>
          new resources on branch
        </BranchRow>
        <Section>On graph<Count>11</Count></Section>
        {ROWS_ON_GRAPH.map((r, i) => (
          <Row key={i} $h={49.36}>
            {r.chip}
            {r.label}
            <Tag $mod={r.mod}>{r.mod ? 'Mod' : 'Add'}</Tag>
          </Row>
        ))}
        <Section $h={41} $top>Can add to graph<Count>0</Count></Section>
        <Empty>All eligible resources are on the graph</Empty>
        <Section $top>Unsupported<Count>4</Count></Section>
        {ROWS_UNSUPPORTED.map((r, i) => (
          <Row key={i} $h={49.5}>
            {r.chip}
            {r.label}
            <Tag $mod={r.mod}>{r.mod ? 'Mod' : 'Add'}</Tag>
          </Row>
        ))}
        <Section $top>Inaccessible<Count>0</Count></Section>
      </Panel>

      <Work>
        <Canvas>
          <EdgeLayer />
          {NODES.map((n, i) => <GraphNode key={i} node={n} />)}

          <Toolbar>
            <Group><Btn>{Ic.move}</Btn><Btn $on>{selectIcon(SLATE)}</Btn></Group>
            <Btn>{Ic.target}</Btn>
            <Group><Btn $off>{Ic.pieX}</Btn><Btn>{Ic.trash}</Btn></Group>
            <Btn>{Ic.layout}</Btn>
            <Btn>{Ic.merge}</Btn>
            <Btn><FaCog size={23} color={SLATE} /></Btn>
            <Btn $off>{Ic.graph}</Btn>
            <Btn>{Ic.search}</Btn>
            <ToolSep />
            <Btn>{Ic.addText}</Btn>
            <Btn $off>{Ic.present}</Btn>
          </Toolbar>

          <ViewTools>
            <Btn>{Ic.eye}</Btn>
            <NodeSelect>
              {Ic.nodeType}
              Node type
              <Caret $auto />
            </NodeSelect>
          </ViewTools>

          <Legend>
            <LegendItem>
              <Swatch $c="#fff" /><LegendIcon><Cube s={19} c="#2f73da" /></LegendIcon>
              Object type<LegendCount>(5)</LegendCount>
            </LegendItem>
            <LegendItem>
              <Swatch $c="#dccdbc" /><LegendIcon><Gavel s={22} c="#a0632f" /></LegendIcon>
              Action<LegendCount>(3)</LegendCount>
            </LegendItem>
            <LegendItem>
              <Swatch $c="#ffcabc" /><LegendIcon><Dashed s={21} c="#f0674a" /></LegendIcon>
              Interface<LegendCount>(2)</LegendCount>
            </LegendItem>
            <LegendItem>
              <Swatch $c="#eee3fd" /><LegendIcon><Workshop s={22} /></LegendIcon>
              Workshop application<LegendCount>(1)</LegendCount>
            </LegendItem>
          </Legend>

          <ZoomTools>
            <Group $col>
              <Btn>{Ic.zoomIn}</Btn>
              <Btn>{Ic.zoomOut}</Btn>
              <Btn>{Ic.fit}</Btn>
            </Group>
            <Btn $off>{Ic.present}</Btn>
          </ZoomTools>

          <Selected>{selectIcon(GREY)}0 nodes selected</Selected>
        </Canvas>

        <TabBar>
          <Tab $w={214} $pl={7} $c="#7c68e0">
            <FxUp>fx{Ic.fxUp}</FxUp>
            Update applications
          </Tab>
          <Tab $w={272} $c="#1c2127"><Gavel s={22} c="#1c2127" />Update submission criteria</Tab>
          <Tab $w={210} $pl={3} $c="#3ea590">{Ic.bars}Model usage charts</Tab>
          <TabEnd>{Ic.chevUp}</TabEnd>
        </TabBar>
      </Work>
    </Main>

    <BottomFrame>
      <FootCell $w={274} $line $gap={9} $pl={14}>
        <Branch s={22} c="#fff" />
        new resources on br…
        <Caret $ml={16} $c="#fff" />
      </FootCell>
      <FootCell $w={90} $line $gap={12}>
        <FaFolderOpen size={22} color="#fff" />
        <FootCount>15</FootCount>
      </FootCell>
      <FootCell $w={186} $bg="#1f7045" $c="#8fc5a6" $gap={12} $pl={16}>
        {Ic.mergeP}Merge proposal
      </FootCell>
      <FootCell $w={155} $bg="#fff" $c="#1c2127" $gap={12} $pl={14}>
        View proposal
        {Ic.openArrow}
      </FootCell>
    </BottomFrame>
  </Shell>
);

export default App;
